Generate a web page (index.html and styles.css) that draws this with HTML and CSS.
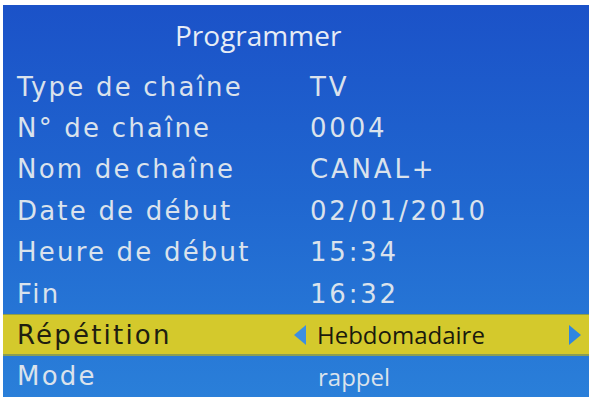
FILE: index.html
```html
<!DOCTYPE html>
<html lang="fr">
<head>
<meta charset="utf-8">
<title>Programmer</title>
<link rel="stylesheet" href="styles.css">
</head>
<body>
<div class="screen">
  <div class="title">Programmer</div>
  <div class="row"><span class="label">Type de chaîne</span><span class="value">TV</span></div>
  <div class="row"><span class="label">N° de chaîne</span><span class="value">0004</span></div>
  <div class="row"><span class="label">Nom <span class="tight">de</span>chaîne</span><span class="value">CANAL+</span></div>
  <div class="row"><span class="label">Date de début</span><span class="value">02/01/2010</span></div>
  <div class="row"><span class="label">Heure de début</span><span class="value">15:34</span></div>
  <div class="row"><span class="label">Fin</span><span class="value">16:32</span></div>
  <div class="row selected">
    <span class="label">Répétition</span>
    <span class="arrow left"></span>
    <span class="value alt">Hebdomadaire</span>
    <span class="arrow right"></span>
  </div>
  <div class="row"><span class="label">Mode</span><span class="value alt">rappel</span></div>
</div>
</body>
</html>
```
FILE: styles.css
```css
html, body {
  margin: 0;
  padding: 0;
  background: #ffffff;
}
body {
  padding: 5px 3px 4px 3px;
  width: 586px;
  height: 392px;
}
.screen {
  width: 586px;
  height: 392px;
  background: linear-gradient(180deg, #1b52c8 0%, #2067d0 50%, #2a7fd9 100%);
  display: flex;
  flex-direction: column;
  overflow: hidden;
}
.title {
  height: 61px;
  box-sizing: border-box;
  padding-left: 172px;
  padding-top: 12px;
  font-family: "Open Sans", sans-serif;
  font-size: 28px;
  line-height: 36px;
  color: #e6ecf5;
}
.row {
  height: 41.5px;
  display: flex;
  align-items: center;
  position: relative;
  font-family: "DejaVu Sans", sans-serif;
  font-size: 26px;
  color: #dae2ec;
  letter-spacing: 2.2px;
}
.label {
  width: 307px;
  padding-left: 14px;
  box-sizing: border-box;
  white-space: nowrap;
}
.tight {
  margin-right: 4px;
}
.value {
  letter-spacing: 2.8px;
  white-space: nowrap;
}
.value.alt {
  font-family: "Open Sans", sans-serif;
  font-size: 24px;
  letter-spacing: 0;
  padding-left: 8px;
}
.selected {
  background: #d4c92c;
  color: #201e10;
  box-shadow: inset 0 1px 0 #8c9e4a, inset 0 -2px 0 #8a9e54;
}
.selected .label {
  width: 291px;
}
.selected .value.alt {
  color: #1a1a0c;
  padding-left: 11px;
  flex: 1;
}
.arrow {
  width: 0;
  height: 0;
  border-top: 10px solid transparent;
  border-bottom: 10px solid transparent;
}
.arrow.left {
  border-right: 12px solid #3d8fe0;
}
.arrow.right {
  border-left: 12px solid #2f86e0;
  margin-right: 8px;
}
```
